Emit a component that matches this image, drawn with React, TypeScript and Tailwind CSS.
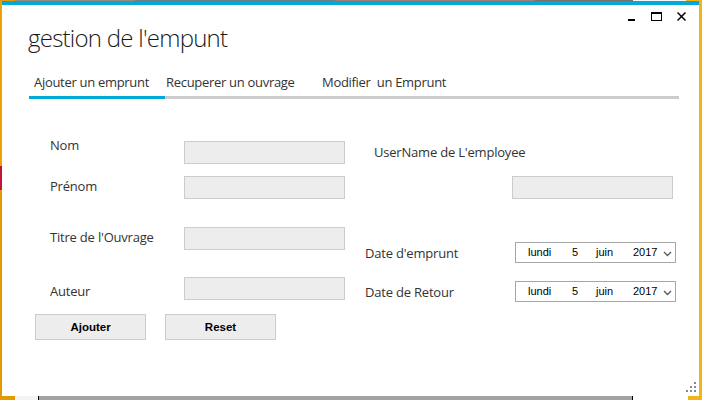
import React from "react";

function TextInput({ className = "" }: { className?: string }) {
  return <div className={"w-[161px] h-[23px] bg-[#ededed] border border-[#cccccc] shrink-0 " + className} />;
}

function DatePicker() {
  return (
    <div className="w-[161px] h-[21px] bg-white border border-[#a6a6a6] flex items-center shrink-0 font-['Liberation_Sans',sans-serif] text-[11px] text-black leading-none tracking-normal">
      <span className="ml-[12px] w-[44px]">lundi</span>
      <span className="w-[24px]">5</span>
      <span className="w-[37px]">juin</span>
      <span className="w-[30px]">2017</span>
      <svg width="9" height="6" viewBox="0 0 9 6" className="mt-[2px]">
        <path d="M1 1 L4.5 4.5 L8 1" fill="none" stroke="#5a5a5a" strokeWidth="1.4" />
      </svg>
    </div>
  );
}

function Button({ label }: { label: string }) {
  return (
    <div className="w-[111px] h-[26px] bg-[#ededed] border border-[#cccccc] flex items-center justify-center font-['Liberation_Sans',sans-serif] font-bold text-[11.5px] text-black tracking-normal">
      {label}
    </div>
  );
}

export default function App() {
  return (
    <div className="w-[702px] h-[400px] flex flex-col overflow-hidden bg-[#eea000] font-['Open_Sans',sans-serif]">
      {/* desktop strip at top */}
      <div className="h-[1px] flex">
        <div className="w-[15px] bg-[#e49a10]" />
        <div className="w-[120px] bg-[#9a8a78]" />
        <div className="w-[200px] bg-[#6d7d86]" />
        <div className="w-[200px] bg-[#a08070]" />
        <div className="w-[98px] bg-[#7a6e66]" />
        <div className="flex-1 bg-[#f5f5f5]" />
        <div className="w-[16px] bg-[#f2b41a]" />
      </div>

      <div className="flex-1 flex">
        {/* left desktop edge */}
        <div className="w-[2px] flex flex-col">
          <div className="h-[165px] bg-[#eea000]" />
          <div className="h-[24px] bg-[#c4123a]" />
          <div className="flex-1 bg-[#e39a00]" />
        </div>

        {/* window */}
        <div className="w-[697px] bg-white flex flex-col relative">
          <div className="h-[4px] bg-[#00a9d8]" />

          {/* title bar controls */}
          <div className="h-[17px] flex justify-end items-start pt-[7px] pr-[13px]">
            <svg width="7" height="10" viewBox="0 0 7 10">
              <rect x="0" y="7" width="7" height="2" fill="#000" />
            </svg>
            <svg width="11" height="10" viewBox="0 0 11 10" className="ml-[16px]">
              <rect x="0.5" y="0.5" width="10" height="8" fill="none" stroke="#000" strokeWidth="1" />
              <rect x="0" y="0" width="11" height="2" fill="#000" />
            </svg>
            <svg width="9" height="10" viewBox="0 0 9 10" className="ml-[15px]">
              <path d="M0.5 0.5 L8.5 8.5 M8.5 0.5 L0.5 8.5" stroke="#000" strokeWidth="1.5" />
            </svg>
          </div>

          {/* title */}
          <div className="pl-[26px] h-[32px] text-[24px] leading-[32px] font-light tracking-[-0.75px] text-[#1a1a1a]">
            gestion de l'empunt
          </div>

          {/* tabs */}
          <div className="mt-[19px] ml-[27px] w-[650px] flex border-b-[3px] border-[#cccccc] text-[13px] leading-[18px] tracking-[-0.3px] text-[#333333]">
            <div className="w-[136px] pl-[5px] pb-[5px] -mb-[3px] border-b-[3px] border-[#00a9d8]">Ajouter un emprunt</div>
            <div className="w-[157px] pl-[1px] pb-[5px]">Recuperer un ouvrage</div>
            <div className="pb-[5px] whitespace-pre">Modifier  un Emprunt</div>
          </div>

          {/* form */}
          <div className="flex text-[13px] leading-[18px] tracking-[-0.2px] text-[#333333]">
            {/* left column */}
            <div className="ml-[33px] w-[310px] flex flex-col pt-[37px]">
              <div className="ml-[15px] flex items-start">
                <div className="w-[134px]">Nom</div>
                <TextInput className="mt-[5px]" />
              </div>
              <div className="ml-[15px] mt-[12px] flex items-start">
                <div className="w-[134px] mt-[1px]">Prénom</div>
                <TextInput />
              </div>
              <div className="ml-[15px] mt-[28px] flex items-start">
                <div className="w-[134px] mt-[1px]">Titre de l'Ouvrage</div>
                <TextInput />
              </div>
              <div className="ml-[15px] mt-[27px] flex items-start">
                <div className="w-[134px] mt-[5px]">Auteur</div>
                <TextInput />
              </div>
              <div className="mt-[14px] flex gap-[19px]">
                <Button label="Ajouter" />
                <Button label="Reset" />
              </div>
            </div>

            {/* right column */}
            <div className="ml-[20px] flex flex-col pt-[44px]">
              <div className="ml-[9px]">UserName de L'employee</div>
              <TextInput className="ml-[147px] mt-[15px]" />
              <div className="mt-[43px] flex items-start">
                <div className="w-[150px] mt-[2px]">Date d'emprunt</div>
                <DatePicker />
              </div>
              <div className="mt-[18px] flex items-start">
                <div className="w-[150px] mt-[2px]">Date de Retour</div>
                <DatePicker />
              </div>
            </div>
          </div>

          {/* resize grip */}
          <svg width="10" height="10" viewBox="0 0 10 10" className="absolute right-[3px] bottom-[4px]">
            <rect x="8" y="0" width="2" height="2" fill="#8a8a8a" />
            <rect x="4" y="4" width="2" height="2" fill="#8a8a8a" />
            <rect x="8" y="4" width="2" height="2" fill="#8a8a8a" />
            <rect x="0" y="8" width="2" height="2" fill="#8a8a8a" />
            <rect x="4" y="8" width="2" height="2" fill="#8a8a8a" />
            <rect x="8" y="8" width="2" height="2" fill="#8a8a8a" />
          </svg>
        </div>

        {/* right desktop edge */}
        <div className="flex-1 bg-[#f2b41a]" />
      </div>

      {/* desktop strip at bottom */}
      <div className="h-[4px] flex">
        <div className="w-[15px] bg-[#e39a00]" />
        <div className="w-[23px] bg-[#f4f4f4]" />
        <div className="w-[1px] bg-black" />
        <div className="w-[593px] bg-[#a3a3a3]" />
        <div className="w-[1px] bg-black" />
        <div className="w-[55px] bg-white" />
        <div className="flex-1 bg-[#f2b41a]" />
      </div>
    </div>
  );
}
